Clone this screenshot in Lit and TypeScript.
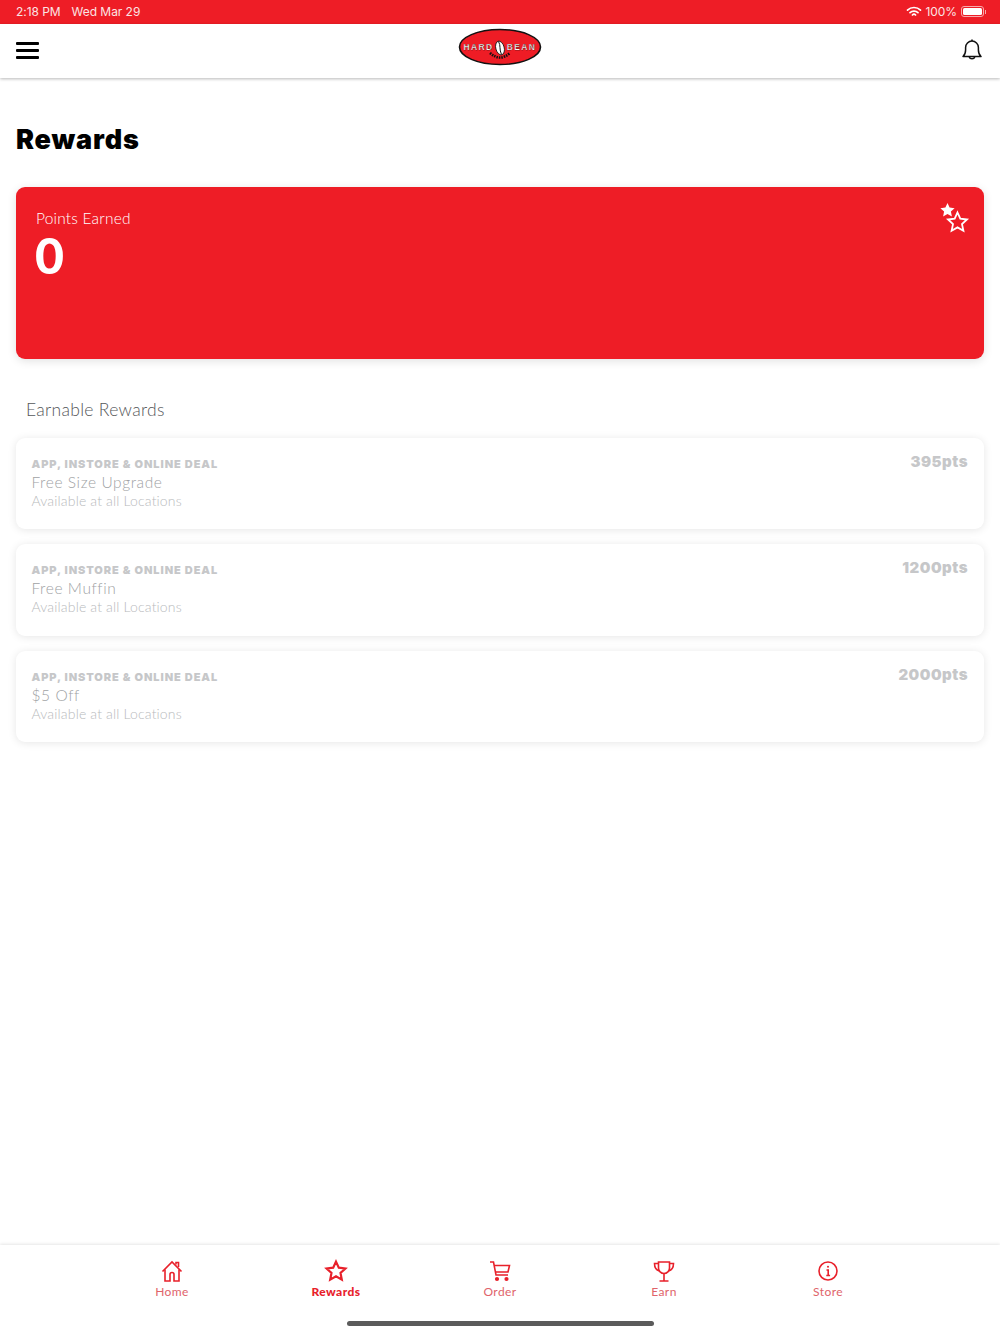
import { LitElement, html, css, svg } from "lit";
import { customElement } from "lit/decorators.js";

const rewards = [
  { name: "Free Size Upgrade", pts: "395pts" },
  { name: "Free Muffin", pts: "1200pts" },
  { name: "$5 Off", pts: "2000pts" },
];

const star = "M12 2.600l2.800 6.100 6.600.8-4.900 4.500 1.300 6.600L12 17.300l-5.800 3.300 1.300-6.600-4.900-4.500 6.600-.8z";

const tabs = [
  {
    label: "Home",
    icon: svg`<path d="M2.500 12.500 12 3l9.500 9.500" /><path d="M5 10.500V22h5v-6.500a2 2 0 0 1 4 0V22h5V10.500" /><path d="M16 5.500V3.500h2.500v4.500" />`,
  },
  { label: "Rewards", active: true, icon: svg`<path d=${star} stroke-width="2.200" />` },
  {
    label: "Order",
    icon: svg`<path d="M2 3h3.500l2.500 13h12" /><path d="M6 6.500h15.500L20 13H7.200" /><circle cx="9" cy="20" r="1.300" fill="currentColor" /><circle cx="18.500" cy="20" r="1.300" fill="currentColor" />`,
  },
  {
    label: "Earn",
    icon: svg`<path d="M6.500 3h11v6a5.500 5.500 0 0 1-11 0z" /><path d="M6.500 4.500H2.500c0 4 1.500 6.500 5 7.500M17.500 4.500h4c0 4-1.500 6.500-5 7.500" /><path d="M12 14.500V22M7.500 22h9" />`,
  },
  {
    label: "Store",
    icon: svg`<circle cx="12" cy="12" r="9" /><path d="M10.500 11h1.700v5.500M10.300 16.500h3.800" /><circle cx="12" cy="7.800" r="1" fill="currentColor" stroke="none" />`,
  },
];

@customElement("app-root")
export class AppRoot extends LitElement {
  static styles = css`
    :host {
      display: flex;
      flex-direction: column;
      height: 1334px;
      background: #fff;
      font-family: Lato, "Noto Sans", sans-serif;
      color: #000;
      overflow: hidden;
    }

    .status {
      height: 24px;
      flex: none;
      box-sizing: border-box;
      background: #ee1d26;
      color: #fbe4e4;
      font-family: Inter, sans-serif;
      font-size: 12px;
      letter-spacing: -0.05px;
      padding: 0 14px 1px 16px;
      display: flex;
      align-items: center;
      justify-content: space-between;
    }

    .status-left {
      display: flex;
      gap: 11px;
    }

    .status-right {
      display: flex;
      align-items: center;
      gap: 3px;
    }

    .battery {
      display: flex;
      align-items: center;
      margin-left: 1px;
    }

    .battery-body {
      width: 23px;
      height: 11px;
      box-sizing: border-box;
      border: 1px solid #f8a9ac;
      border-radius: 3px;
      padding: 1px;
    }

    .battery-body div {
      height: 100%;
      background: #fff;
      border-radius: 1.500px;
    }

    .battery-cap {
      width: 1px;
      height: 4px;
      margin-left: 1px;
      background: #f8a9ac;
    }

    .nav {
      height: 54px;
      flex: none;
      box-sizing: border-box;
      padding: 0 16px;
      display: grid;
      grid-template-columns: 1fr auto 1fr;
      align-items: center;
      background: #fff;
      box-shadow: 0 1px 3px rgba(0, 0, 0, 0.28);
      position: relative;
    }

    .burger {
      width: 23px;
      display: flex;
      flex-direction: column;
      gap: 4px;
      margin-top: -1px;
    }

    .burger div {
      height: 3px;
      background: #000;
      border-radius: 1px;
    }

    .logo {
      display: block;
      margin-top: -8px;
      margin-left: -1px;
    }

    .bell {
      justify-self: end;
      margin-right: 2px;
      margin-top: -2px;
      display: block;
    }

    main {
      flex: 1;
      padding: 44px 16px 0;
    }

    h1 {
      margin: 0 0 30px;
      font-family: Inter, sans-serif;
      font-size: 27px;
      line-height: 35px;
      font-weight: 900;
      letter-spacing: 0.85px;
    }

    .points {
      height: 172px;
      box-sizing: border-box;
      background: #ee1d26;
      border-radius: 9px;
      padding: 21px 20px;
      color: #fff;
      position: relative;
      box-shadow: 0 2px 10px rgba(0, 0, 0, 0.12);
    }

    .points-label {
      font-size: 15.500px;
      line-height: 20px;
      font-weight: 300;
      color: #fff;
      letter-spacing: 0.2px;
    }

    .points-value {
      font-size: 50px;
      line-height: 50px;
      font-weight: 900;
      margin-top: 2px;
      margin-left: -1px;
    }

    .stars {
      position: absolute;
      top: 15px;
      right: 12px;
    }

    h2 {
      margin: 38.500px 0 16px 10px;
      font-size: 17.500px;
      line-height: 24px;
      font-weight: 300;
      color: #55575a;
      letter-spacing: 0.3px;
    }

    .reward {
      height: 91.500px;
      box-sizing: border-box;
      margin-bottom: 15px;
      padding: 19px 16px 0 15.500px;
      border-radius: 9px;
      background: #fff;
      box-shadow: 0 1px 8px rgba(0, 0, 0, 0.1);
      display: flex;
      justify-content: space-between;
      align-items: flex-start;
    }

    .deal {
      font-family: Inter, sans-serif;
      font-size: 11px;
      line-height: 14px;
      font-weight: 900;
      color: #c6c7c9;
      letter-spacing: 0.92px;
    }

    .name {
      font-size: 15.500px;
      line-height: 20px;
      font-weight: 300;
      color: #a0a2a4;
      letter-spacing: 0.58px;
      margin-top: 1px;
    }

    .where {
      font-size: 14px;
      line-height: 18px;
      font-weight: 300;
      color: #b8babc;
      letter-spacing: 0.16px;
    }

    .pts {
      font-family: Inter, sans-serif;
      font-size: 15px;
      line-height: 18px;
      font-weight: 900;
      color: #c6c7c9;
      letter-spacing: 0.5px;
      margin-top: -4px;
    }

    .tabbar {
      height: 89px;
      flex: none;
      box-sizing: border-box;
      background: #fff;
      box-shadow: 0 -1px 3px rgba(0, 0, 0, 0.1);
      position: relative;
      padding: 14px 90px 0;
      display: flex;
      align-items: flex-start;
    }

    .tab {
      flex: 1;
      display: flex;
      flex-direction: column;
      align-items: center;
      gap: 1px;
      color: #e8212b;
      font-size: 12px;
      line-height: 16px;
      letter-spacing: 0.4px;
    }

    .tab span {
      color: #e0636a;
    }

    .tab.active span {
      color: #e8212b;
      font-weight: 900;
    }

    .tab svg {
      display: block;
    }

    .indicator {
      position: absolute;
      left: 347px;
      bottom: 8px;
      width: 307px;
      height: 5px;
      border-radius: 3px;
      background: #5b5b5b;
    }
  `;

  render() {
    return html`
      <div class="status">
        <div class="status-left"><span>2:18 PM</span><span>Wed Mar 29</span></div>
        <div class="status-right">
          <svg width="16" height="12" viewBox="0 0 16 12" fill="none" stroke="#fff" stroke-width="1.700" stroke-linecap="round">
            <path d="M1.500 4.200a9.200 9.200 0 0 1 13 0" />
            <path d="M4 6.700a5.700 5.700 0 0 1 8 0" />
            <path d="M6.400 9a2.300 2.300 0 0 1 3.200 0" />
          </svg>
          <span>100%</span>
          <div class="battery">
            <div class="battery-body"><div></div></div>
            <div class="battery-cap"></div>
          </div>
        </div>
      </div>

      <div class="nav">
        <div class="burger"><div></div><div></div><div></div></div>
        <svg class="logo" width="84" height="38" viewBox="0 0 84 38">
          <ellipse cx="42" cy="19" rx="40.500" ry="17.500" fill="#ee1c25" stroke="#111" stroke-width="1.600" />
          <text x="20.500" y="21.800" text-anchor="middle" font-family="Liberation Sans" font-size="8.500" font-weight="700" letter-spacing="1.300" fill="#fff" stroke="#111" stroke-width="0.250">HARD</text>
          <text x="63.500" y="21.800" text-anchor="middle" font-family="Liberation Sans" font-size="8.500" font-weight="700" letter-spacing="1.300" fill="#fff" stroke="#111" stroke-width="0.250">BEAN</text>
          <ellipse cx="42" cy="20" rx="4.200" ry="7" fill="#fff" stroke="#111" stroke-width="0.800" transform="rotate(-15 42 20)" />
          <path d="M40.500 13.500c2.500 4 .5 8 3 13" fill="none" stroke="#111" stroke-width="1" />
          <path d="M32 25q10 9 20 0" fill="none" stroke="#111" stroke-width="2.600" stroke-dasharray="1.500 1" />
        </svg>
        <svg class="bell" width="20" height="24" viewBox="0 0 20 24" fill="none" stroke="#111" stroke-width="1.500" stroke-linejoin="round">
          <path d="M1 18.500c2-1.800 2.600-3.500 2.600-6.500V9.500a6.400 6.400 0 0 1 12.800 0V12c0 3 .6 4.700 2.600 6.500z" />
          <path d="M7.200 18.700a2.900 2.900 0 0 0 5.600 0" />
          <path d="M10 1.500v1.600" />
        </svg>
      </div>

      <main>
        <h1>Rewards</h1>
        <div class="points">
          <div class="points-label">Points Earned</div>
          <div class="points-value">0</div>
          <svg class="stars" width="32" height="34" viewBox="0 0 32 34">
            <path d="M7.500 1l2.100 4.600 5 .6-3.700 3.400 1 5-4.400-2.500-4.400 2.500 1-5L.4 6.200l5-.6z" fill="#fff" />
            <path d="M17.500 8.500l2.800 6.200 6.700.8-5 4.600 1.400 6.700-5.900-3.400-5.900 3.400 1.400-6.700-5-4.600 6.700-.8z" fill="none" stroke="#fff" stroke-width="1.800" stroke-linejoin="miter" transform="translate(0 2)" />
          </svg>
        </div>

        <h2>Earnable Rewards</h2>
        ${rewards.map(
          (r) => html`
            <div class="reward">
              <div>
                <div class="deal">APP, INSTORE &amp; ONLINE DEAL</div>
                <div class="name">${r.name}</div>
                <div class="where">Available at all Locations</div>
              </div>
              <div class="pts">${r.pts}</div>
            </div>
          `
        )}
      </main>

      <div class="tabbar">
        ${tabs.map(
          (t) => html`
            <div class="tab ${t.active ? "active" : ""}">
              <svg width="24" height="24" viewBox="0 0 24 24" fill="none" stroke="currentColor" stroke-width="1.600">${t.icon}</svg>
              <span>${t.label}</span>
            </div>
          `
        )}
        <div class="indicator"></div>
      </div>
    `;
  }
}
